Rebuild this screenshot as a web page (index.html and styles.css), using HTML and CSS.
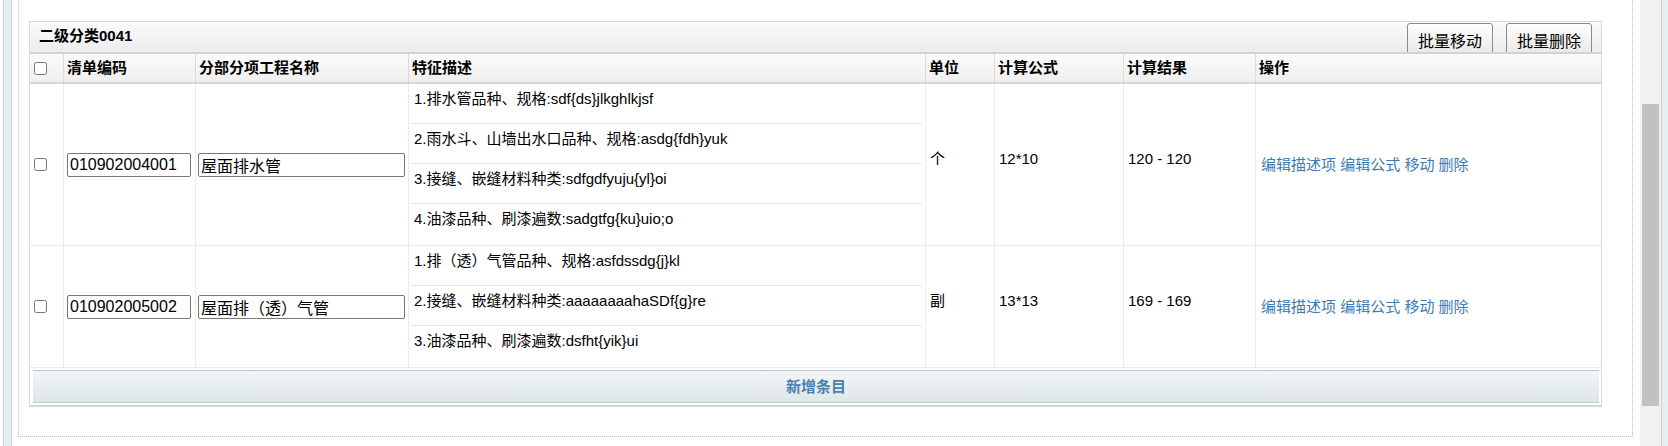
FILE: index.html
```html
<!DOCTYPE html>
<html lang="zh-CN">
<head>
<meta charset="utf-8">
<title>二级分类0041</title>
<link rel="stylesheet" href="styles.css">
</head>
<body>
<div class="page">
  <div class="edge edge-left"></div>
  <div class="main">
    <div class="frame">
      <div class="panel">
        <div class="panel-head">
          <span class="panel-title">二级分类0041</span>
          <div class="head-actions">
            <button class="btn" type="button">批量移动</button>
            <button class="btn" type="button">批量删除</button>
          </div>
        </div>
        <table class="grid">
          <thead>
            <tr>
              <th class="c-check"><input type="checkbox" class="cb"></th>
              <th class="c-code">清单编码</th>
              <th class="c-name">分部分项工程名称</th>
              <th class="c-desc">特征描述</th>
              <th class="c-unit">单位</th>
              <th class="c-formula">计算公式</th>
              <th class="c-result">计算结果</th>
              <th class="c-ops">操作</th>
            </tr>
          </thead>
          <tbody>
            <tr>
              <td class="cell-check"><input type="checkbox" class="cb"></td>
              <td class="cell-code"><input class="code-input" type="text" value="010902004001"></td>
              <td class="cell-name"><input class="name-input" type="text" value="屋面排水管"></td>
              <td class="cell-desc">
                <div class="desc-item">1.排水管品种、规格:sdf{ds}jlkghlkjsf</div>
                <div class="desc-item">2.雨水斗、山墙出水口品种、规格:asdg{fdh}yuk</div>
                <div class="desc-item">3.接缝、嵌缝材料种类:sdfgdfyuju{yl}oi</div>
                <div class="desc-item">4.油漆品种、刷漆遍数:sadgtfg{ku}uio;o</div>
              </td>
              <td class="cell-text">个</td>
              <td class="cell-text">12*10</td>
              <td class="cell-text">120 - 120</td>
              <td class="cell-ops">
                <a href="#" class="op">编辑描述项</a>
                <a href="#" class="op">编辑公式</a>
                <a href="#" class="op">移动</a>
                <a href="#" class="op">删除</a>
              </td>
            </tr>
            <tr>
              <td class="cell-check"><input type="checkbox" class="cb"></td>
              <td class="cell-code"><input class="code-input" type="text" value="010902005002"></td>
              <td class="cell-name"><input class="name-input" type="text" value="屋面排（透）气管"></td>
              <td class="cell-desc">
                <div class="desc-item">1.排（透）气管品种、规格:asfdssdg{j}kl</div>
                <div class="desc-item">2.接缝、嵌缝材料种类:aaaaaaaahaSDf{g}re</div>
                <div class="desc-item">3.油漆品种、刷漆遍数:dsfht{yik}ui</div>
              </td>
              <td class="cell-text">副</td>
              <td class="cell-text">13*13</td>
              <td class="cell-text">169 - 169</td>
              <td class="cell-ops">
                <a href="#" class="op">编辑描述项</a>
                <a href="#" class="op">编辑公式</a>
                <a href="#" class="op">移动</a>
                <a href="#" class="op">删除</a>
              </td>
            </tr>
          </tbody>
        </table>
        <div class="add-row">
          <button class="add-btn" type="button">新增条目</button>
        </div>
      </div>
    </div>
  </div>
  <div class="scrollbar"><div class="thumb"></div></div>
  <div class="edge edge-right"></div>
</div>
</body>
</html>
```

FILE: styles.css
```css
* { box-sizing: border-box; }

html, body {
  margin: 0;
  padding: 0;
  background: #fff;
}

body {
  font-family: "Liberation Sans", "Noto Sans CJK SC", sans-serif;
  font-size: 15px;
  color: #000;
  overflow: hidden;
}

.page {
  display: flex;
  height: 446px;
}

.edge-left {
  margin-left: 3px;
  width: 9px;
  border-left: 1px solid #c4d3d8;
  border-right: 1px solid #c4d3d8;
  background: #e6eef0;
}

.edge-right {
  width: 7px;
  border-left: 1px solid #c4d3d8;
  background: #e6eef0;
}

.main {
  flex: 1;
  min-width: 0;
  padding: 0 7px 9px 6px;
  display: flex;
  flex-direction: column;
  justify-content: flex-end;
}

.frame {
  border: 1px dotted #9fcbdc;
  border-top: none;
  padding: 21px 30px 29px 10px;
}

.panel {
  border: 1px solid #dadada;
  border-bottom: 2px solid #d4d4d4;
  background: #fff;
}

.panel-head {
  height: 32px;
  border-bottom: 2px solid #d2d2d2;
  background: linear-gradient(#fafafa, #ececec);
  display: flex;
  justify-content: space-between;
  align-items: flex-start;
  padding: 0 9px 0 9px;
  overflow: hidden;
}

.panel-title {
  font-weight: bold;
  font-size: 15px;
  line-height: 28px;
}

.head-actions {
  display: flex;
  gap: 13px;
}

.btn {
  display: block;
  width: 86px;
  height: 34px;
  margin-top: 1px;
  padding: 4px 0 0;
  font-family: "Liberation Sans", "Noto Sans CJK SC", sans-serif;
  font-size: 16px;
  line-height: 22px;
  color: #000;
  text-align: center;
  border: 1px solid #8a8a8a;
  border-radius: 3px;
  background: linear-gradient(#fdfdfd, #e8e8e8);
}

.grid {
  width: 100%;
  border-collapse: separate;
  border-spacing: 0;
  table-layout: fixed;
}

.grid th {
  height: 30px;
  padding: 0 3px;
  text-align: left;
  font-weight: bold;
  font-size: 15px;
  line-height: 20px;
  background: linear-gradient(#fbfbfb, #efefef);
  border-right: 1px solid #dcdcdc;
  border-bottom: 2px solid #d6d6d6;
  white-space: nowrap;
}

.grid td {
  padding: 0 4px;
  vertical-align: middle;
  border-right: 1px solid #ebebeb;
  border-bottom: 1px solid #ebebeb;
  line-height: 20px;
}

.grid th:last-child,
.grid td:last-child {
  border-right: none;
}

.c-check { width: 34px; }
.c-code { width: 132px; }
.c-name { width: 213px; }
.c-desc { width: 517px; }
.c-unit { width: 69px; }
.c-formula { width: 129px; }
.c-result { width: 132px; }
.c-ops { width: 345px; }

.grid th.c-check,
.grid td.cell-check {
  padding: 0 0 0 4px;
}

.cb {
  display: block;
  width: 13px;
  height: 13px;
  margin: 0;
}

.grid td.cell-code { padding: 0 0 0 3px; }
.grid td.cell-name { padding: 0 0 0 2px; }

.code-input,
.name-input {
  display: block;
  height: 24px;
  margin: 0;
  padding: 0 2px;
  border: 1px solid #767676;
  border-radius: 2px;
  font-family: "Liberation Sans", "Noto Sans CJK SC", sans-serif;
  font-size: 16px;
  color: #000;
  background: #fff;
}

.code-input { width: 124px; }
.name-input { width: 207px; }

.grid td.cell-desc {
  padding: 0 3px 0 2px;
  vertical-align: top;
}

.desc-item {
  height: 40px;
  padding: 5px 0 0 3px;
  line-height: 20px;
  border-bottom: 1px solid #e6e6e6;
  white-space: nowrap;
}

.desc-item:last-child {
  height: 41px;
  border-bottom: none;
}

.grid td.cell-text {
  padding: 0 4px 11px 4px;
}

.grid td.cell-ops {
  padding: 0 4px 0 5px;
}

.op {
  color: #3b7bb5;
  text-decoration: none;
  font-size: 15px;
}

.add-row {
  padding: 2px 2px 2px 3px;
}

.add-btn {
  display: block;
  width: 100%;
  height: 33px;
  margin: 0;
  padding: 0 0 3px;
  border: none;
  border-top: 1px solid #b8c8ce;
  border-bottom: 1px solid #b8c8ce;
  background: linear-gradient(#f3f6f7, #dde6e8);
  font-family: "Liberation Sans", "Noto Sans CJK SC", sans-serif;
  font-size: 15px;
  font-weight: bold;
  color: #4a80ad;
}

.scrollbar {
  width: 21px;
  background: #f1f1f1;
  padding: 104px 2px 0;
}

.thumb {
  height: 302px;
  background: #c1c1c1;
}
```
